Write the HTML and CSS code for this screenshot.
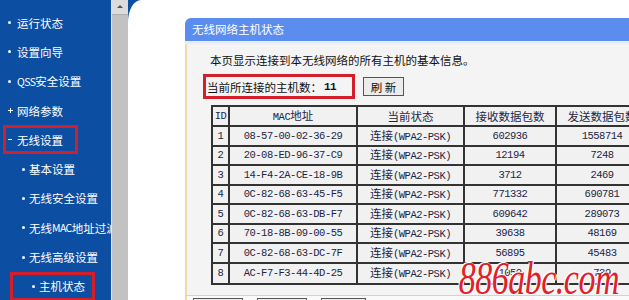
FILE: index.html
```html
<!DOCTYPE html>
<html>
<head>
  <meta charset="UTF-8" />
  <title>无线网络主机状态</title>
  <link rel="stylesheet" href="styles.css">
</head>
<body>
  <div class="frame">
    <div class="sidebar">
      <ul class="menu">
        <li class="item"><i class="dot"></i>运行状态</li>
        <li class="item"><i class="dot"></i>设置向导</li>
        <li class="item"><i class="dot"></i><span class="lat">QSS</span>安全设置</li>
        <li class="item"><i class="dot plus"></i>网络参数</li>
        <li class="item hl-top"><i class="dot minus"></i>无线设置</li>
        <li class="item sub"><i class="dot"></i>基本设置</li>
        <li class="item sub"><i class="dot"></i>无线安全设置</li>
        <li class="item sub"><i class="dot"></i>无线<span class="lat">MAC</span>地址过滤</li>
        <li class="item sub"><i class="dot"></i>无线高级设置</li>
        <li class="item sub hl-sub"><i class="dot"></i>主机状态</li>
      </ul>
    </div>
    <div class="scrollbar"><div class="arrow"></div></div>
    <div class="main">
      <div class="content">
        <div class="panel">
          <div class="panel-title">无线网络主机状态</div>
          <div class="panel-body">
            <p class="info">本页显示连接到本无线网络的所有主机的基本信息。</p>
            <div class="count-row">
              <span class="count">当前所连接的主机数：<b class="mono">11</b></span>
              <button class="btn">刷 新</button>
            </div>
            <table class="hosts">
              <colgroup>
                <col class="c-id"><col class="c-mac"><col class="c-state"><col class="c-num"><col class="c-num">
              </colgroup>
              <tr class="head"><th class="mono">ID</th><th><span class="mono">MAC</span>地址</th><th>当前状态</th><th>接收数据包数</th><th>发送数据包数</th></tr>
              <tr><td class="mono">1</td><td class="mono">08-57-00-02-36-29</td><td>连接<span class="mono">(WPA2-PSK)</span></td><td class="mono">602936</td><td class="mono">1558714</td></tr>
              <tr><td class="mono">2</td><td class="mono">20-08-ED-96-37-C9</td><td>连接<span class="mono">(WPA2-PSK)</span></td><td class="mono">12194</td><td class="mono">7248</td></tr>
              <tr><td class="mono">3</td><td class="mono">14-F4-2A-CE-18-9B</td><td>连接<span class="mono">(WPA2-PSK)</span></td><td class="mono">3712</td><td class="mono">2469</td></tr>
              <tr><td class="mono">4</td><td class="mono">0C-82-68-63-45-F5</td><td>连接<span class="mono">(WPA2-PSK)</span></td><td class="mono">771332</td><td class="mono">690781</td></tr>
              <tr><td class="mono">5</td><td class="mono">0C-82-68-63-DB-F7</td><td>连接<span class="mono">(WPA2-PSK)</span></td><td class="mono">609642</td><td class="mono">289073</td></tr>
              <tr><td class="mono">6</td><td class="mono">70-18-8B-09-00-55</td><td>连接<span class="mono">(WPA2-PSK)</span></td><td class="mono">39638</td><td class="mono">48169</td></tr>
              <tr><td class="mono">7</td><td class="mono">0C-82-68-63-DC-7F</td><td>连接<span class="mono">(WPA2-PSK)</span></td><td class="mono">56895</td><td class="mono">45483</td></tr>
              <tr class="last"><td class="mono">8</td><td class="mono">AC-F7-F3-44-4D-25</td><td>连接<span class="mono">(WPA2-PSK)</span></td><td class="mono">1050</td><td class="mono">739</td></tr>
            </table>
          </div>
          <div class="panel-foot">
            <span class="fbtn"></span><span class="fbtn"></span><span class="fbtn short"></span>
          </div>
        </div>
      </div>
    </div>
    <div class="watermark">886abc.com</div>
  </div>
</body>
</html>
```

FILE: styles.css
```css
body { margin: 0; font-family: "Noto Sans CJK SC", sans-serif; font-size: 11.5px; overflow: hidden; }
.frame { display: flex; width: 629px; height: 300px; position: relative; overflow: hidden; }

.sidebar { width: 111px; flex: none; background: #0c4ea2; overflow: hidden; }
.menu { list-style: none; margin: 0; padding: 8px 0 0 0; }
.item {
  display: flex; align-items: center;
  height: 29.3px; padding-left: 8px;
  color: #fff; white-space: nowrap;
}
.item.sub { padding-left: 22px; }
.lat { font-size: 10.5px; letter-spacing: -0.6px; }
.dot { width: 3px; height: 3px; flex: none; background: #fff; border-radius: 50%; margin-right: 6px; }
.sub .dot { margin-right: 4px; }
.dot.plus {
  width: 5px; height: 5px; border-radius: 0; margin-right: 4px;
  background: linear-gradient(#fff, #fff) center / 5px 1px no-repeat,
              linear-gradient(#fff, #fff) center / 1px 5px no-repeat;
}
.dot.minus { width: 4px; height: 1px; border-radius: 0; margin-right: 5px; }
.hl-top, .hl-sub { box-sizing: border-box; box-shadow: inset 0 0 0 3px #d41f2a; }
.hl-top { margin-left: 3px; width: 75px; padding-left: 5px; }
.hl-sub { margin-left: 10px; width: 85px; padding-left: 12px; }

.scrollbar { width: 16px; flex: none; background: #c2c2c2; border-left: 1px solid #e6e6e6; }
.scrollbar .arrow {
  height: 14px; background: #dcdcdc; position: relative;
  border-bottom: 1px solid #b0b0b0;
}
.scrollbar .arrow::after {
  content: ""; position: absolute; left: 5px; top: 5px;
  border: 3px solid transparent; border-bottom: 3px solid #555; border-top: 0;
}

.main { flex: 1; background: #0c4ea2; }
.content {
  height: 100%; box-sizing: border-box; overflow: hidden;
  background: #fff; border-top-left-radius: 13px 22px;
  padding: 18px 0 0 57px;
}
.panel { width: 520px; }
.panel-title {
  height: 23px; line-height: 23px; padding-left: 7px;
  background: #5b8def; color: #fff;
  border-top-left-radius: 6px;
  border-bottom: 3px solid #e6eefb;
}
.panel-body {
  background: #f4f4f4;
  border-left: 2px solid #f0d8b0;
  border-bottom: 1px solid #e8cfa4;
  padding: 8px 0 10px 16px;
}
.info { margin: 0 0 6px 7px; line-height: 16px; color: #111; }
.count-row { display: flex; align-items: center; }
.count {
  box-sizing: border-box; width: 152px; height: 25px;
  display: flex; align-items: center; padding-left: 4px;
  box-shadow: inset 0 0 0 3px #d41f2a; color: #111;
}
.count b { font-size: 11px; margin-left: 2px; }
.btn {
  margin-left: 8px; width: 41px; height: 19px; padding: 0;
  font: 11.5px "Noto Sans CJK SC", sans-serif;
  background: #ececec; border: 1px solid #555; color: #111;
}

.mono { font-family: "Liberation Mono", monospace; font-size: 10.5px; letter-spacing: -0.5px; }
.hosts {
  margin: 6px 0 0 8px;
  border-collapse: collapse; table-layout: fixed; width: 438px;
  color: #1e2544;
}
.c-id { width: 17px; }
.c-mac { width: 128px; }
.c-state { width: 107px; }
.c-num { width: 92px; }
.hosts tr { height: 19.5px; }
.hosts tr.head { height: 20px; }
.hosts tr.last { height: 21px; }
.hosts th, .hosts td {
  border: 2px solid #333; background: #f1f1f1;
  padding: 0; text-align: center; white-space: nowrap;
  font-weight: normal; line-height: 14px;
}
.hosts td span.mono, .hosts th span.mono { font-size: 10.5px; }

.panel-foot {
  border-left: 2px solid #f0d8b0; background: #fafafa;
  height: 10px; padding: 2px 0 0 6px; display: flex; gap: 14px;
}
.fbtn { width: 50px; height: 20px; border: 1px solid #555; background: #eee; box-sizing: border-box; }
.fbtn.short { width: 45px; }

.watermark {
  position: absolute; right: 10px; bottom: -2px;
  font: italic 34px "Liberation Serif", serif; line-height: 1;
  color: #e2202a; letter-spacing: -0.5px;
  transform: scaleY(1.35); transform-origin: bottom;
  text-shadow: 1px 1px 0 #fff, -1px -1px 0 #fff;
}
```
